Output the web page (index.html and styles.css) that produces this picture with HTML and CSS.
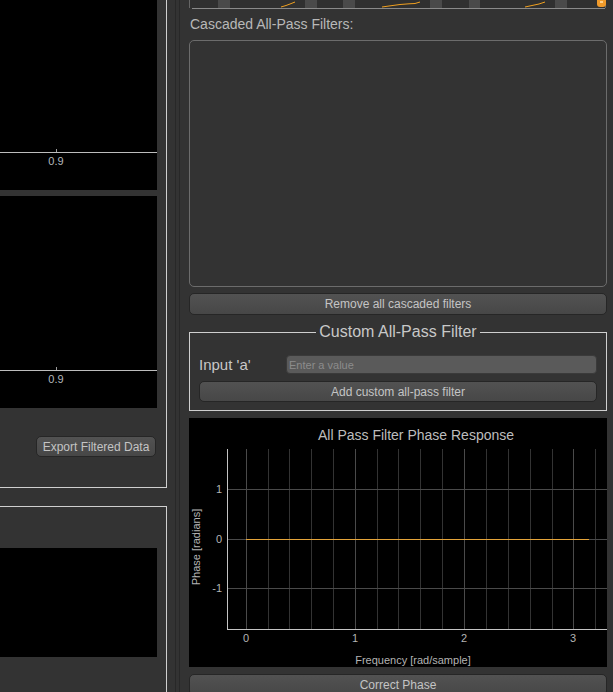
FILE: index.html
```html
<!DOCTYPE html>
<html>
<head>
<meta charset="utf-8">
<link rel="stylesheet" href="styles.css">
</head>
<body>
<div class="app">
  <div class="left">
    <div class="group g1">
      <div class="plot p1">
        <svg class="svg-fill" width="157" height="190" viewBox="0 0 157 190">
          <line x1="0" y1="152.5" x2="157" y2="152.5" stroke="#bdbdbd" stroke-width="1"/>
          <line x1="56.5" y1="149" x2="56.5" y2="152" stroke="#9a9a9a" stroke-width="1"/>
          <text x="56" y="165" class="tick">0.9</text>
        </svg>
      </div>
      <div class="plot p2">
        <svg class="svg-fill" width="157" height="212" viewBox="0 0 157 212">
          <line x1="0" y1="174.5" x2="157" y2="174.5" stroke="#bdbdbd" stroke-width="1"/>
          <line x1="56.5" y1="171" x2="56.5" y2="174" stroke="#9a9a9a" stroke-width="1"/>
          <text x="56" y="187" class="tick">0.9</text>
        </svg>
      </div>
      <div class="export-row"><button class="btn export">Export Filtered Data</button></div>
    </div>
    <div class="group g2">
      <div class="plot p3"></div>
    </div>
  </div>
  <div class="splitter"></div>
  <div class="right">
    <svg class="strip" width="418" height="9" viewBox="0 0 418 9">
      <rect x="1" y="0" width="415" height="8" fill="#303030"/>
      <rect x="29" y="0" width="12" height="8" fill="#4a4a4a"/>
      <rect x="116" y="0" width="12" height="8" fill="#4a4a4a"/>
      <rect x="154" y="0" width="12" height="8" fill="#4a4a4a"/>
      <rect x="241" y="0" width="12" height="8" fill="#4a4a4a"/>
      <rect x="280" y="0" width="11" height="8" fill="#4a4a4a"/>
      <rect x="366" y="0" width="12" height="8" fill="#4a4a4a"/>
      <line x1="0.5" y1="0" x2="0.5" y2="8" stroke="#666" stroke-width="1"/>
      <line x1="416.5" y1="0" x2="416.5" y2="8" stroke="#666" stroke-width="1"/>
      <line x1="3" y1="8.5" x2="416" y2="8.5" stroke="#8a8a8a" stroke-width="1"/>
      <polyline points="92,7 97,5.5 101,4 106,2" fill="none" stroke="#f0a020" stroke-width="1"/>
      <polyline points="193,7 200,6 211,4.5 220,3.8 226,3.5 231,2" fill="none" stroke="#f0a020" stroke-width="1"/>
      <polyline points="336,7 343,5.5 350,4 356,2" fill="none" stroke="#f0a020" stroke-width="1"/>
      <path d="M408 0 H417 V4 Q417 7 414 7 H411 Q408 7 408 4 Z" fill="#f09a2a"/>
      <rect x="411" y="1" width="3" height="2" fill="#ffd08a"/>
    </svg>
    <div class="label">Cascaded All-Pass Filters:</div>
    <div class="listbox"></div>
    <button class="btn wide remove">Remove all cascaded filters</button>
    <div class="custom">
      <div class="custom-title">Custom All-Pass Filter</div>
      <div class="input-row">
        <span class="input-label">Input 'a'</span>
        <input class="input" type="text" placeholder="Enter a value">
      </div>
      <button class="btn add">Add custom all-pass filter</button>
    </div>
    <div class="phase-plot">
      <svg class="svg-fill" width="418" height="249" viewBox="0 0 418 249">
        <g stroke="#333" stroke-width="1">
          <line x1="79.5" y1="31" x2="79.5" y2="211"/>
          <line x1="100.5" y1="31" x2="100.5" y2="211"/>
          <line x1="122.5" y1="31" x2="122.5" y2="211"/>
          <line x1="144.5" y1="31" x2="144.5" y2="211"/>
          <line x1="188.5" y1="31" x2="188.5" y2="211"/>
          <line x1="209.5" y1="31" x2="209.5" y2="211"/>
          <line x1="231.5" y1="31" x2="231.5" y2="211"/>
          <line x1="253.5" y1="31" x2="253.5" y2="211"/>
          <line x1="297.5" y1="31" x2="297.5" y2="211"/>
          <line x1="319.5" y1="31" x2="319.5" y2="211"/>
          <line x1="341.5" y1="31" x2="341.5" y2="211"/>
          <line x1="363.5" y1="31" x2="363.5" y2="211"/>
          <line x1="406.5" y1="31" x2="406.5" y2="211"/>
        </g>
        <g stroke="#4a4a4a" stroke-width="1">
          <line x1="57.5" y1="31" x2="57.5" y2="211"/>
          <line x1="166.5" y1="31" x2="166.5" y2="211"/>
          <line x1="275.5" y1="31" x2="275.5" y2="211"/>
          <line x1="384.5" y1="31" x2="384.5" y2="211"/>
          <line x1="38" y1="71.5" x2="418" y2="71.5"/>
          <line x1="38" y1="121.5" x2="418" y2="121.5"/>
          <line x1="38" y1="170.5" x2="418" y2="170.5"/>
        </g>
        <line x1="57" y1="121.5" x2="400" y2="121.5" stroke="#e4a43a" stroke-width="1"/>
        <line x1="38.5" y1="31" x2="38.5" y2="211.5" stroke="#c4c4c4" stroke-width="1"/>
        <line x1="38" y1="211.5" x2="418" y2="211.5" stroke="#c4c4c4" stroke-width="1"/>
        <text x="227" y="22" class="ptitle">All Pass Filter Phase Response</text>
        <text x="33" y="75" class="ylab">1</text>
        <text x="33" y="125" class="ylab">0</text>
        <text x="33" y="174" class="ylab">-1</text>
        <text x="57" y="224" class="xlab">0</text>
        <text x="166" y="224" class="xlab">1</text>
        <text x="275" y="224" class="xlab">2</text>
        <text x="384" y="224" class="xlab">3</text>
        <text x="224" y="246" class="xlab">Frequency [rad/sample]</text>
        <text x="0" y="0" class="xlab" transform="translate(11 129) rotate(-90)">Phase [radians]</text>
      </svg>
    </div>
    <button class="btn wide correct">Correct Phase</button>
  </div>
</div>
</body>
</html>
```

FILE: styles.css
```css
html, body {
  margin: 0;
  padding: 0;
  background: #333333;
}

body {
  width: 613px;
  height: 692px;
  overflow: hidden;
  font-family: "Liberation Sans", Arial, sans-serif;
}

.app {
  display: flex;
  height: 692px;
}

.left {
  width: 175px;
  flex: none;
  display: flex;
  flex-direction: column;
}

.group {
  box-sizing: border-box;
  width: 167px;
  border-right: 1px solid #cfcfcf;
  padding-right: 9px;
}

.g1 {
  height: 488px;
  flex: none;
  border-bottom: 1px solid #cfcfcf;
  display: flex;
  flex-direction: column;
}

.plot {
  background: #000;
  flex: none;
}

.p1 { height: 190px; }
.p2 { height: 212px; margin-top: 6px; }

.svg-fill { display: block; }

.tick {
  fill: #b4b8bc;
  font-size: 11px;
  text-anchor: middle;
  font-family: "Liberation Sans", Arial, sans-serif;
}

.export-row {
  display: flex;
  justify-content: flex-end;
  padding-top: 28px;
  padding-right: 1px;
}

.g2 {
  margin-top: 18px;
  border-top: 1px solid #cfcfcf;
  flex: 1;
  padding-top: 41px;
}

.p3 { height: 109px; }

.splitter {
  width: 5px;
  flex: none;
  box-sizing: border-box;
  border-left: 1px solid #282828;
  border-right: 1px solid #282828;
}

.right {
  flex: 1;
  min-width: 0;
  padding: 0 6px 0 9px;
  display: flex;
  flex-direction: column;
  overflow: hidden;
}

.right > * { flex-shrink: 0; }

.strip { display: block; }

.label {
  height: 31px;
  line-height: 31px;
  font-size: 14px;
  color: #b8b8b8;
  padding-left: 1px;
}

.listbox {
  height: 247px;
  box-sizing: border-box;
  border: 1px solid #6c6c6c;
  border-radius: 5px;
}

.btn {
  box-sizing: border-box;
  font-family: "Liberation Sans", Arial, sans-serif;
  font-size: 12px;
  color: #c4c4c4;
  background: linear-gradient(#525252, #474747);
  border: 1px solid #262626;
  border-radius: 5px;
  padding: 0;
  margin: 0;
}

.export {
  width: 120px;
  height: 21px;
}

.wide {
  width: 100%;
  height: 22px;
}

.remove { margin-top: 6px; }

.custom {
  margin-top: 17px;
  border: 1px solid #cfcfcf;
  padding: 0 9px 8px 9px;
  display: flex;
  flex-direction: column;
}

.custom-title {
  align-self: center;
  margin-top: -10px;
  font-size: 16px;
  line-height: 18px;
  background: #333333;
  padding: 0 3px;
  color: #c8c8c8;
}

.input-row {
  display: flex;
  align-items: center;
  margin-top: 14px;
  height: 19px;
}

.input-label {
  width: 87px;
  flex: none;
  font-size: 15px;
  color: #c8c8c8;
}

.input {
  flex: 1;
  min-width: 0;
  height: 19px;
  box-sizing: border-box;
  background: #5a5a5a;
  border: 1px solid #3a3a3a;
  border-radius: 4px;
  font-family: "Liberation Sans", Arial, sans-serif;
  font-size: 11px;
  padding: 0 2px;
  color: #dddddd;
  outline: none;
  margin: 0;
}

.input::placeholder { color: #8c8c8c; }

.add {
  margin-top: 7px;
  height: 21px;
}

.phase-plot {
  margin-top: 7px;
  height: 249px;
  background: #000;
}

.ptitle {
  fill: #bdbdbd;
  font-size: 14px;
  text-anchor: middle;
  font-family: "Liberation Sans", Arial, sans-serif;
}

.ylab {
  fill: #b4b4b4;
  font-size: 11px;
  text-anchor: end;
  font-family: "Liberation Sans", Arial, sans-serif;
}

.xlab {
  fill: #b4b4b4;
  font-size: 11px;
  text-anchor: middle;
  font-family: "Liberation Sans", Arial, sans-serif;
}

.correct { margin-top: 7px; }
```
